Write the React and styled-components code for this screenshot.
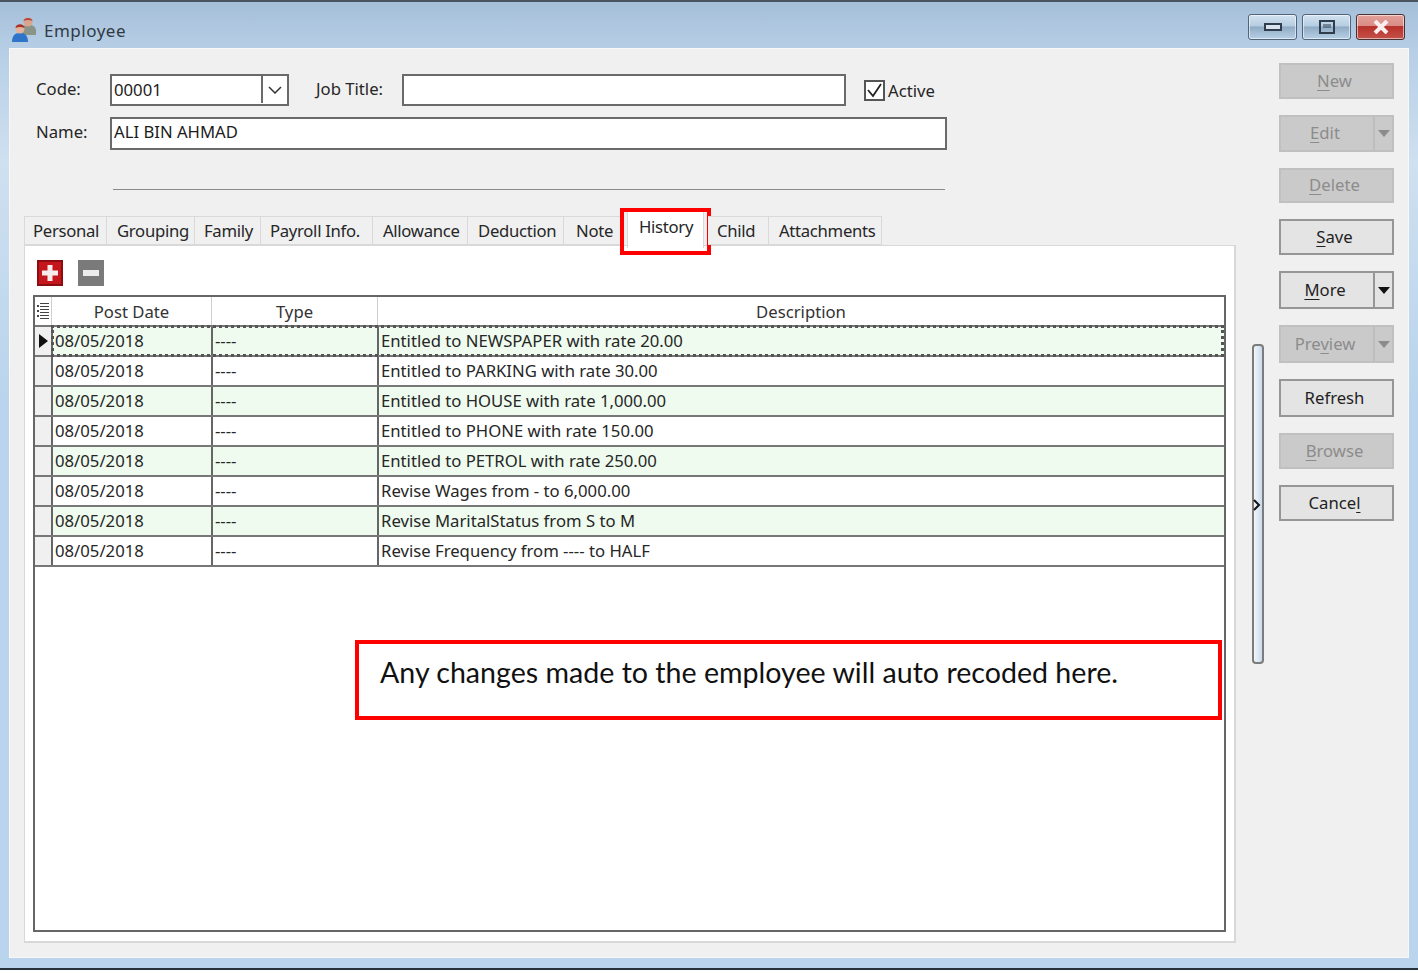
import styled, { createGlobalStyle } from "styled-components";

const GlobalStyle = createGlobalStyle`
  html, body {
    margin: 0;
    padding: 0;
    background: #fff;
    overflow: hidden;
  }
  * {
    box-sizing: border-box;
  }
`;

const Window = styled.div`
  width: 1418px;
  height: 970px;
  display: flex;
  flex-direction: column;
  padding: 0 9px 10px;
  font-family: "Noto Sans", "Liberation Sans", sans-serif;
  font-size: 16.7px;
  color: #262626;
  border-top: 2px solid #4a5560;
  border-bottom: 2px solid #27323c;
  background: linear-gradient(180deg, #a6bfd9 0, #b7cfe6 50px, #cfe0f0 160px, #b9d4ec 400px, #b9d4ec 100%);
`;

const TitleBar = styled.div`
  height: 46px;
  flex: none;
  display: flex;
  align-items: center;
  padding: 10px 3px 0 1px;
`;

const TitleText = styled.span`
  margin-left: 6px;
  font-size: 17px;
  letter-spacing: 0.5px;
  color: #303a44;
`;

const WindowButtons = styled.div`
  margin-left: auto;
  display: flex;
  gap: 5px;
  margin-right: 1px;
  margin-top: -7px;
`;

const WindowButton = styled.div`
  width: 49px;
  height: 26px;
  display: flex;
  align-items: center;
  justify-content: center;
  border: 1px solid ${(p) => (p.$close ? "#4a3030" : "#50647a")};
  border-radius: 3px;
  box-shadow: inset 0 0 0 1px rgba(255, 255, 255, 0.55);
  background: ${(p) =>
    p.$close
      ? "linear-gradient(180deg, #e3a09a 0, #d98c85 45%, #b8312b 48%, #c4524a 100%)"
      : "linear-gradient(180deg, #d3e2f0 0, #b6cde2 45%, #90abc4 50%, #b7d0e6 100%)"};
`;

const Client = styled.div`
  flex: 1;
  display: flex;
  background: #f0f0f0;
  box-shadow: inset 0 0 0 1px #f8f8f8;
`;

const Main = styled.div`
  width: 1226px;
  flex: none;
  padding: 26px 0 0 15px;
`;

const Form = styled.div`
  padding-left: 12px;
  display: flex;
  flex-direction: column;
  gap: 11px;
`;

const FormRow = styled.div`
  height: 32px;
  display: flex;
  align-items: center;
`;

const Label = styled.label`
  width: ${(p) => p.$width}px;
  margin-left: ${(p) => p.$left || 0}px;
  padding-bottom: 3px;
  flex: none;
`;

const TextBox = styled.div`
  width: ${(p) => p.$width}px;
  height: ${(p) => (p.$tall ? 33 : 32)}px;
  flex: none;
  padding: 0 0 ${(p) => (p.$tall ? 3 : 1)}px 2px;
  display: flex;
  align-items: center;
  background: #fff;
  border: 2px solid #6a6a6a;
  color: #1c1c1c;
`;

const ComboArrow = styled.div`
  margin-left: auto;
  width: 26px;
  height: 100%;
  display: flex;
  align-items: center;
  justify-content: center;
  border-left: 2px solid #6a6a6a;
`;

const CheckBox = styled.div`
  width: 21px;
  height: 21px;
  margin-left: 18px;
  flex: none;
  display: flex;
  align-items: center;
  justify-content: center;
  background: #fff;
  border: 2px solid #555;
`;

const CheckLabel = styled.span`
  margin-left: 3px;
`;

const Divider = styled.div`
  width: 832px;
  height: 1px;
  margin: 40px 0 0 89px;
  background: #8a8a8a;
`;

const TabStrip = styled.div`
  display: flex;
  height: 29px;
  margin-top: 26px;
  position: relative;
  z-index: 1;
  letter-spacing: -0.3px;
`;

const Tab = styled.div`
  position: relative;
  width: ${(p) => p.$width}px;
  height: ${(p) => (p.$active ? 37 : 29)}px;
  margin: ${(p) => (p.$active ? "-5px 4px 0 3px" : "0")};
  padding-left: ${(p) => p.$pad}px;
  padding-bottom: ${(p) => (p.$active ? 7 : 0)}px;
  flex: none;
  display: flex;
  align-items: center;
  white-space: nowrap;
  background: ${(p) => (p.$active ? "#fff" : "#f0f0f0")};
  border: 1px solid #d9d9d9;
  border-bottom: ${(p) => (p.$active ? "none" : "1px solid #d9d9d9")};
  border-left-width: ${(p) => (p.$first || p.$active ? 1 : 0)}px;
`;

const TabMark = styled.div`
  position: absolute;
  left: -8px;
  top: -4px;
  width: 91px;
  height: 47px;
  border: 4px solid #f00;
`;

const Panel = styled.div`
  width: 1212px;
  height: 698px;
  padding: 14px 0 0 8px;
  background: #fff;
  border: 1px solid #d8d8d8;
  border-width: 1px 2px 2px 1px;
`;

const Toolbar = styled.div`
  height: 26px;
  display: flex;
  gap: 15px;
  padding-left: 4px;
`;

const Grid = styled.div`
  position: relative;
  width: 1193px;
  height: 637px;
  margin-top: 9px;
  border: 2px solid #666;
  background: #fff;
`;

const Row = styled.div`
  display: grid;
  grid-template-columns: 16px 160px 166px 1fr;
  height: 30px;
  background: ${(p) => (p.$shaded ? "#eefbee" : "#fff")};
  border-bottom: 2px solid #777;
`;

const HeaderCell = styled.div`
  display: flex;
  align-items: center;
  justify-content: center;
  color: #333;
  border-left: ${(p) => (p.$first ? "none" : "1px solid #cfcfcf")};
`;

const Indicator = styled.div`
  display: flex;
  align-items: center;
  justify-content: center;
  background: #f0f0f0;
`;

const Cell = styled.div`
  display: flex;
  align-items: center;
  padding: 0 0 2px 2px;
  white-space: nowrap;
  border-left: 2px solid #666;
`;

const FocusRow = styled(Row)`
  position: relative;
`;

const FocusOutline = styled.div`
  position: absolute;
  left: 16px;
  right: 0;
  top: -2px;
  bottom: -2px;
  border: 3px dotted #555;
  pointer-events: none;
`;

const Note = styled.div`
  position: absolute;
  left: 320px;
  top: 343px;
  width: 867px;
  height: 80px;
  padding: 11px 0 0 21px;
  background: #fff;
  border: 4px solid #f00;
  font-family: Lato, "Open Sans", sans-serif;
  font-size: 28.6px;
  color: #111;
`;

const SplitterColumn = styled.div`
  width: 44px;
  flex: none;
  padding: 296px 0 0 17px;
`;

const Splitter = styled.div`
  position: relative;
  width: 12px;
  height: 320px;
  background: linear-gradient(90deg, #f5f5f5, #c6dcf0);
  border: 2px solid #7c7c7c;
  border-radius: 4px;
`;

const SplitterArrow = styled.svg`
  position: absolute;
  left: -1px;
  top: 153px;
`;

const Side = styled.div`
  width: 115px;
  flex: none;
  padding-top: 15px;
  display: flex;
  flex-direction: column;
  gap: 16px;
`;

const ActionButton = styled.div`
  height: ${(p) => p.$height}px;
  display: flex;
  background: ${(p) => (p.$disabled ? "#cacaca" : "#e4e4e4")};
  color: ${(p) => (p.$disabled ? "#8c8c8c" : "#1f1f1f")};
  border: 2px solid ${(p) => (p.$disabled ? "#c0c0c0" : "#969696")};

  u {
    text-underline-offset: 3px;
    text-decoration-thickness: 1px;
  }
`;

const ActionLabel = styled.span`
  flex: 1;
  display: flex;
  align-items: center;
  justify-content: center;
  padding: 0 4px 2px 0;
`;

const ActionArrow = styled.span`
  width: 19px;
  flex: none;
  display: flex;
  align-items: center;
  justify-content: center;
  border-left: 2px solid ${(p) => (p.$disabled ? "#bdbdbd" : "#969696")};
`;

const tabs = [
  { title: "Personal", width: 83, pad: 8 },
  { title: "Grouping", width: 88, pad: 10 },
  { title: "Family", width: 66, pad: 9 },
  { title: "Payroll Info.", width: 112, pad: 9 },
  { title: "Allowance", width: 95, pad: 10 },
  { title: "Deduction", width: 96, pad: 10 },
  { title: "Note", width: 60, pad: 12 },
  { title: "History", width: 77, pad: 11, active: true },
  { title: "Child", width: 61, pad: 9 },
  { title: "Attachments", width: 113, pad: 10 },
];

const rows = [
  "Entitled to NEWSPAPER with rate 20.00",
  "Entitled to PARKING with rate 30.00",
  "Entitled to HOUSE with rate 1,000.00",
  "Entitled to PHONE with rate 150.00",
  "Entitled to PETROL with rate 250.00",
  "Revise Wages from - to 6,000.00",
  "Revise MaritalStatus from S to M",
  "Revise Frequency from ---- to HALF",
];

const buttons = [
  { pre: "", key: "N", post: "ew", height: 36, disabled: true },
  { pre: "", key: "E", post: "dit", height: 37, disabled: true, arrow: true },
  { pre: "", key: "D", post: "elete", height: 35, disabled: true },
  { pre: "", key: "S", post: "ave", height: 36 },
  { pre: "", key: "M", post: "ore", height: 38, arrow: true },
  { pre: "Pre", key: "v", post: "iew", height: 38, disabled: true, arrow: true },
  { pre: "Refresh", key: "", post: "", height: 38 },
  { pre: "", key: "B", post: "rowse", height: 36, disabled: true },
  { pre: "Cance", key: "l", post: "", height: 36 },
];

function EmployeeIcon() {
  return (
    <svg width="28" height="28" viewBox="0 0 28 28">
      <path d="M11 15c0-4 3-6 6-6h3c3 0 6 2 6 6v4H11z" fill="#8a9488" />
      <circle cx="18" cy="6" r="4.500" fill="#d9a58c" />
      <path d="M13.500 5c0-4 9-4 9 0-3-1.500-6-1.500-9 0z" fill="#b5473a" />
      <path d="M2 26c0-6 3-9 7-9h2c4 0 7 3 7 9z" fill="#2f74c8" />
      <circle cx="10" cy="13" r="4.500" fill="#e4b39b" />
      <path d="M5.500 12c0-5 9-5 9 0-3-1.500-6-1.500-9 0z" fill="#a8322a" />
    </svg>
  );
}

function PlusIcon() {
  return (
    <svg width="26" height="26" viewBox="0 0 26 26">
      <rect width="26" height="26" fill="#c4161c" />
      <rect x="1" y="1" width="24" height="24" fill="none" stroke="#8c0d10" strokeWidth="2" />
      <path d="M10.500 5h5v5.500H21v5h-5.500V21h-5v-5.500H5v-5h5.500z" fill="#f6ecec" />
    </svg>
  );
}

function MinusIcon() {
  return (
    <svg width="26" height="26" viewBox="0 0 26 26">
      <rect width="26" height="26" fill="#7a7a7a" />
      <rect x="5" y="10" width="16" height="6" fill="#ececec" />
    </svg>
  );
}

function ListIcon() {
  return (
    <svg width="12" height="16" viewBox="0 0 12 16" fill="#444">
      <rect x="3" y="0" width="9" height="1" />
      <rect x="0" y="2" width="2" height="2" />
      <rect x="3" y="3" width="9" height="1" />
      <rect x="3" y="6" width="9" height="1" />
      <rect x="0" y="7" width="2" height="2" />
      <rect x="3" y="9" width="9" height="1" />
      <rect x="0" y="12" width="2" height="2" />
      <rect x="3" y="12" width="9" height="1" />
      <rect x="3" y="15" width="9" height="1" />
    </svg>
  );
}

function DownArrow({ disabled }) {
  return (
    <svg width="12" height="7" viewBox="0 0 12 7">
      <path d="M0 0h12L6 7z" fill={disabled ? "#8c8c8c" : "#111"} />
    </svg>
  );
}

export default function App() {
  return (
    <>
      <GlobalStyle />
      <Window>
        <TitleBar>
          <EmployeeIcon />
          <TitleText>Employee</TitleText>
          <WindowButtons>
            <WindowButton>
              <svg width="18" height="9" viewBox="0 0 18 9">
                <rect x="1" y="2" width="16" height="6" fill="#d8e3ee" stroke="#2f3d4c" strokeWidth="2" />
              </svg>
            </WindowButton>
            <WindowButton>
              <svg width="16" height="14" viewBox="0 0 16 14">
                <rect x="1" y="1" width="14" height="12" fill="none" stroke="#2f3d4c" strokeWidth="2" />
                <rect x="4" y="4" width="8" height="4" fill="#2f3d4c" opacity="0.5" />
              </svg>
            </WindowButton>
            <WindowButton $close>
              <svg width="18" height="14" viewBox="0 0 18 14">
                <path d="M3 1l12 12M15 1L3 13" stroke="#fbeeee" strokeWidth="4" />
              </svg>
            </WindowButton>
          </WindowButtons>
        </TitleBar>
        <Client>
          <Main>
            <Form>
              <FormRow>
                <Label $width={74}>Code:</Label>
                <TextBox $width={179}>
                  00001
                  <ComboArrow>
                    <svg width="14" height="8" viewBox="0 0 14 8">
                      <path d="M1 1l6 6 6-6" fill="none" stroke="#333" strokeWidth="1.500" />
                    </svg>
                  </ComboArrow>
                </TextBox>
                <Label $width={86} $left={27}>Job Title:</Label>
                <TextBox $width={444} />
                <CheckBox>
                  <svg width="17" height="15" viewBox="0 0 17 15">
                    <path d="M2 7l5 6L15 1" fill="none" stroke="#222" strokeWidth="1.800" />
                  </svg>
                </CheckBox>
                <CheckLabel>Active</CheckLabel>
              </FormRow>
              <FormRow>
                <Label $width={74}>Name:</Label>
                <TextBox $width={837} $tall>ALI BIN AHMAD</TextBox>
              </FormRow>
            </Form>
            <Divider />
            <TabStrip>
              {tabs.map((tab, index) => (
                <Tab key={tab.title} $width={tab.width} $pad={tab.pad} $active={tab.active} $first={index === 0}>
                  {tab.title}
                  {tab.active && <TabMark />}
                </Tab>
              ))}
            </TabStrip>
            <Panel>
              <Toolbar>
                <PlusIcon />
                <MinusIcon />
              </Toolbar>
              <Grid>
                <Row>
                  <HeaderCell $first><ListIcon /></HeaderCell>
                  <HeaderCell>Post Date</HeaderCell>
                  <HeaderCell>Type</HeaderCell>
                  <HeaderCell>Description</HeaderCell>
                </Row>
                {rows.map((text, index) => {
                  const RowKind = index === 0 ? FocusRow : Row;
                  return (
                    <RowKind key={text} $shaded={index % 2 === 0}>
                      <Indicator>
                        {index === 0 && (
                          <svg width="9" height="14" viewBox="0 0 9 14">
                            <path d="M0 0l9 7-9 7z" fill="#111" />
                          </svg>
                        )}
                      </Indicator>
                      <Cell>08/05/2018</Cell>
                      <Cell>----</Cell>
                      <Cell>{text}</Cell>
                      {index === 0 && <FocusOutline />}
                    </RowKind>
                  );
                })}
                <Note>Any changes made to the employee will auto recoded here.</Note>
              </Grid>
            </Panel>
          </Main>
          <SplitterColumn>
            <Splitter>
              <SplitterArrow width="8" height="12" viewBox="0 0 8 12">
                <path d="M1 1l5 5-5 5" fill="none" stroke="#111" strokeWidth="2" />
              </SplitterArrow>
            </Splitter>
          </SplitterColumn>
          <Side>
            {buttons.map((b) => (
              <ActionButton key={b.pre + b.key + b.post} $height={b.height} $disabled={b.disabled}>
                <ActionLabel>
                  <span>
                    {b.pre}
                    {b.key && <u>{b.key}</u>}
                    {b.post}
                  </span>
                </ActionLabel>
                {b.arrow && (
                  <ActionArrow $disabled={b.disabled}>
                    <DownArrow disabled={b.disabled} />
                  </ActionArrow>
                )}
              </ActionButton>
            ))}
          </Side>
        </Client>
      </Window>
    </>
  );
}
